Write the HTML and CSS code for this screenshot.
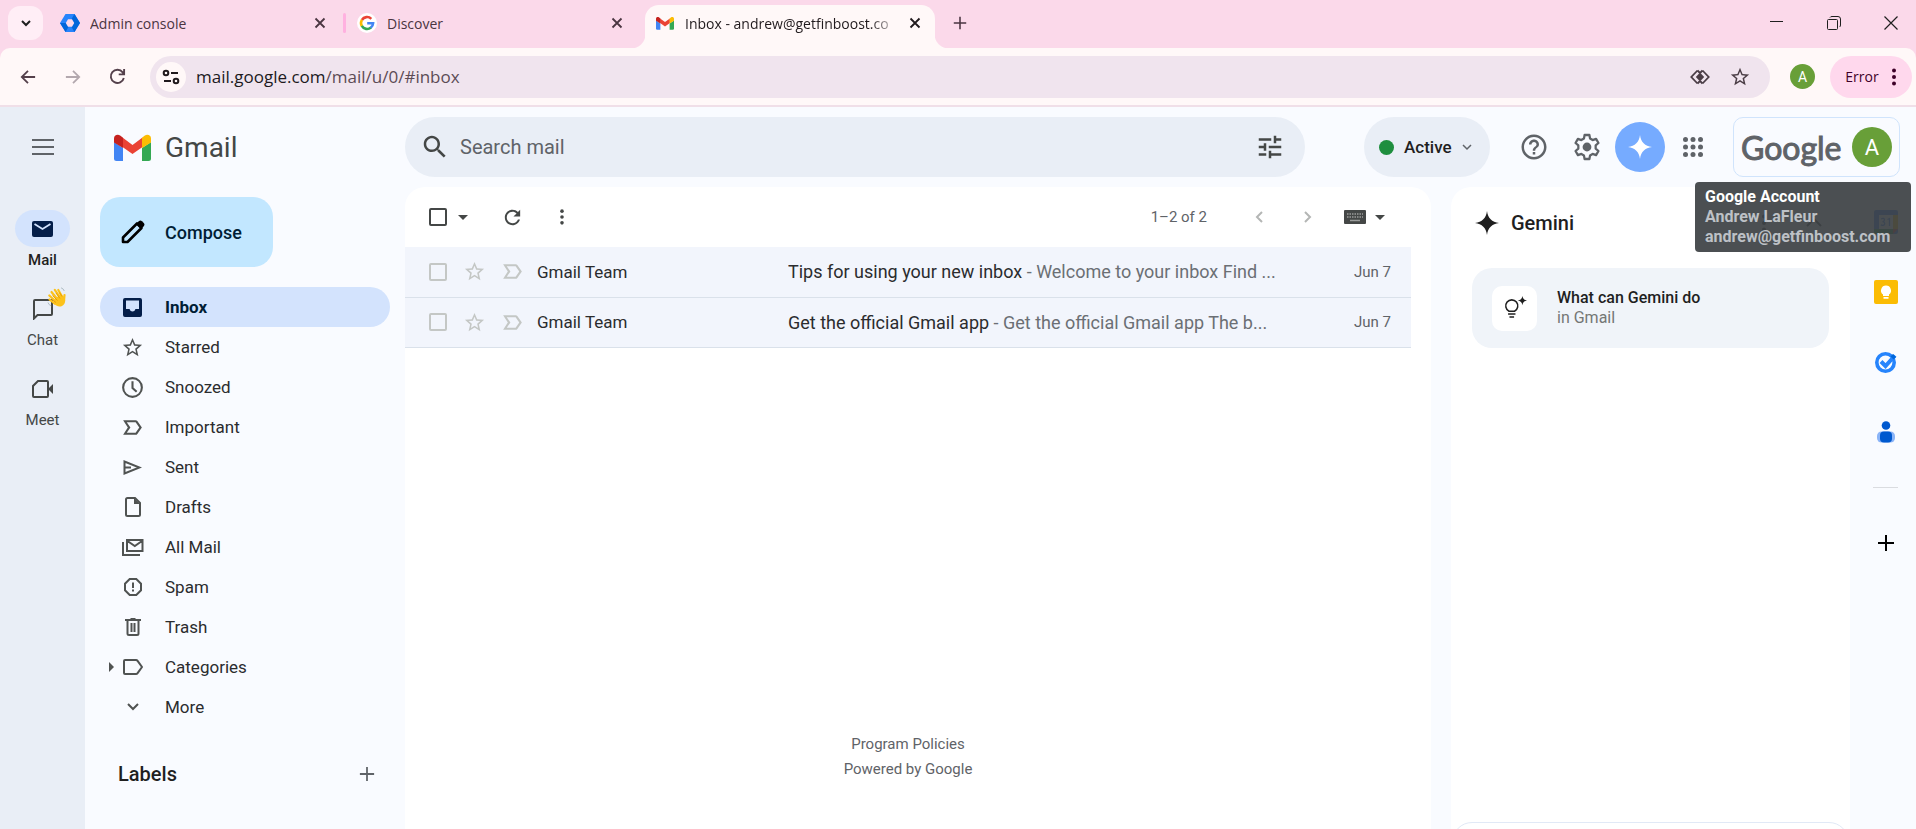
FILE: index.html
```html
<!DOCTYPE html>
<html lang="en">
<head>
<meta charset="utf-8">
<title>Inbox - andrew@getfinboost.com</title>
<link rel="stylesheet" href="styles.css">
</head>
<body>
<svg class="defs" aria-hidden="true">
  <symbol id="gmail" viewBox="0 0 37 28">
    <path fill="#4285f4" d="M0 9v16.500a2.500 2.500 0 0 0 2.500 2.500H9V15z"/>
    <path fill="#34a853" d="M37 9v16.500a2.500 2.500 0 0 1-2.500 2.500H28V15z"/>
    <path fill="#ea4335" d="M8.500 4.500l10 7.500 10-7.500v9.500L18.500 21 8.500 14z"/>
    <path fill="#fbbc04" d="M28 4.700l2.500-2C33.300.6 37 2 37 5.300V9.500L28 15z"/>
    <path fill="#c5221f" d="M9 4.700l-2.500-2C3.700.6 0 2 0 5.300V9.500L9 15z"/>
  </symbol>
  <symbol id="close" viewBox="0 0 12 12"><path d="M1.500 1.500l9 9M10.500 1.500l-9 9" stroke="currentColor" stroke-width="1.800" fill="none"/></symbol>
  <symbol id="star" viewBox="0 0 24 24"><path fill="currentColor" d="M22 9.240l-7.190-.62L12 2 9.190 8.630 2 9.240l5.460 4.730L5.820 21 12 17.270 18.180 21l-1.630-7.030L22 9.240zM12 15.400l-3.760 2.270 1-4.280-3.320-2.880 4.380-.38L12 6.100l1.710 4.040 4.380.38-3.320 2.880 1 4.280L12 15.400z"/></symbol>
  <symbol id="important" viewBox="0 0 24 24"><path fill="currentColor" d="M15 19H3l4.500-7L3 5h12c.65 0 1.260.31 1.630.84L21 12l-4.370 6.160c-.37.52-.98.84-1.630.84zm-8.500-2H15l3.500-5L15 7H6.500l3.500 5-3.500 5z"/></symbol>
  <symbol id="caret" viewBox="0 0 10 5"><path fill="currentColor" d="M0 0h10L5 5z"/></symbol>
  <symbol id="dots" viewBox="0 0 6 20"><circle cx="3" cy="3.500" r="2" fill="currentColor"/><circle cx="3" cy="10" r="2" fill="currentColor"/><circle cx="3" cy="16.500" r="2" fill="currentColor"/></symbol>
  <symbol id="spark" viewBox="0 0 24 24"><path fill="currentColor" d="M12 0c.8 7 5 11.200 12 12-7 .8-11.200 5-12 12-.8-7-5-11.200-12-12 7-.8 11.200-5 12-12z"/></symbol>
  <symbol id="plus" viewBox="0 0 18 18"><path d="M9 1v16M1 9h16" stroke="currentColor" stroke-width="2" fill="none"/></symbol>
</svg>

<header class="browser">
  <div class="tabstrip">
    <button class="tab-search" aria-label="Search tabs"><svg width="10" height="8" viewBox="0 0 10 8"><path d="M1 2l4 4 4-4" fill="none" stroke="currentColor" stroke-width="2"/></svg></button>
    <div class="tab tab-admin">
      <svg width="20" height="20" viewBox="0 0 20 20"><path fill="#2684fc" d="M5.500 1h9L20 10l-5.500 9h-9L0 10z"/><path fill="#0066da" d="M14.500 1L20 10l-5.500 9-3-5 2.500-4-2.500-4zM0 10h6l2.500 4-3 5z"/><path fill="#fbd9ea" d="M8 6.200h4l2.200 3.800-2.200 3.800H8L5.800 10z"/></svg>
      <span class="tab-title">Admin console</span>
      <button class="tab-close" aria-label="Close Admin console"><svg width="12" height="12"><use href="#close"/></svg></button>
    </div>
    <span class="tab-sep"></span>
    <div class="tab tab-discover">
      <svg width="20" height="20" viewBox="0 0 20 20"><circle cx="10" cy="10" r="10" fill="#fff"/><g fill="none" stroke-width="2.600"><path stroke="#ea4335" d="M4.900 7A6 6 0 0 1 14.300 5.800"/><path stroke="#fbbc04" d="M4.900 13.100A6 6 0 0 1 4.900 6.900"/><path stroke="#34a853" d="M14 14.500A6 6 0 0 1 4.800 12.900"/><path stroke="#4285f4" d="M10.200 10.200h5.900A6 6 0 0 1 13.700 14.700"/></g></svg>
      <span class="tab-title">Discover</span>
      <button class="tab-close" aria-label="Close Discover"><svg width="12" height="12"><use href="#close"/></svg></button>
    </div>
    <div class="tab tab-active">
      <svg width="18" height="14"><use href="#gmail"/></svg>
      <span class="tab-title">Inbox - andrew@getfinboost.co</span>
      <button class="tab-close" aria-label="Close Inbox"><svg width="12" height="12"><use href="#close"/></svg></button>
    </div>
    <button class="new-tab" aria-label="New tab"><svg width="14" height="14"><use href="#plus"/></svg></button>
    <div class="window-controls">
      <button aria-label="Minimize"><svg width="14" height="14" viewBox="0 0 14 14"><path d="M0 5.500h13" stroke="currentColor"/></svg></button>
      <button aria-label="Restore"><svg width="14" height="14" viewBox="0 0 14 14" fill="none" stroke="currentColor"><rect x=".5" y="3.500" width="10" height="10" rx="1"/><path d="M3 1.500Q3.500.5 5 .5h6q2.500 0 2.500 2.500v6q0 1.500-1 2"/></svg></button>
      <button aria-label="Close window"><svg width="14" height="14" viewBox="0 0 14 14"><path d="M.5.5l13 13M13.500.5l-13 13" stroke="currentColor" stroke-width="1.200"/></svg></button>
    </div>
  </div>
  <div class="toolbar">
    <button class="nav-btn" aria-label="Back"><svg width="16" height="16" viewBox="0 0 18 18" fill="none" stroke="currentColor" stroke-width="2"><path d="M17 9H2.500M9 2L2 9l7 7"/></svg></button>
    <button class="nav-btn nav-off" aria-label="Forward"><svg width="16" height="16" viewBox="0 0 18 18" fill="none" stroke="currentColor" stroke-width="2"><path d="M1 9h14.500M9 2l7 7-7 7"/></svg></button>
    <button class="nav-btn" aria-label="Reload"><svg width="17" height="17" viewBox="0 0 18 18" fill="none" stroke="currentColor" stroke-width="2"><path d="M15.700 10.500A7 7 0 1 1 14.500 4.600L16 6.500M16 1v5.700h-5.700"/></svg></button>
    <div class="omnibox">
      <button class="site-info" aria-label="Site information"><svg width="18" height="16" viewBox="0 0 18 16" fill="none" stroke="currentColor" stroke-width="2"><circle cx="4" cy="4" r="2.300"/><path d="M9 4h7M2 12h7"/><circle cx="14" cy="12" r="2.300"/></svg></button>
      <a class="url" href="#inbox"><span class="host">mail.google.com</span>/mail/u/0/#inbox</a>
      <button class="omni-btn" aria-label="Lens"><svg width="20" height="16" viewBox="0 0 20 16"><g fill="none" stroke="currentColor" stroke-width="1.800"><path d="M7.500 1.500L1.300 8l6.200 6.500"/><path d="M12.500 1.500L18.700 8l-6.200 6.500M7.500 1.500L10 4M7.500 14.500L10 12M12.500 1.500L10 4M12.500 14.500L10 12"/></g><path fill="currentColor" d="M10 3.500l4.200 4.500-4.200 4.500L5.800 8z"/></svg></button>
      <button class="omni-btn" aria-label="Bookmark"><svg width="22" height="22"><use href="#star"/></svg></button>
    </div>
    <span class="profile">A</span>
    <button class="error-btn">Error <svg width="6" height="20"><use href="#dots"/></svg></button>
  </div>
</header>

<div class="app">
  <nav class="rail" aria-label="Apps">
    <button class="menu-btn" aria-label="Main menu"><svg width="22" height="16" viewBox="0 0 22 16"><path d="M0 1h22M0 8h22M0 15h22" stroke="currentColor" stroke-width="2"/></svg></button>
    <a class="rail-item rail-on" href="#mail"><span class="rail-icon"><svg width="21" height="16" viewBox="0 0 21 16"><rect width="21" height="16" rx="2" fill="currentColor"/><path d="M2.500 3l8 5 8-5" fill="none" stroke="#d3e3fd" stroke-width="1.800"/></svg></span>Mail</a>
    <a class="rail-item" href="#chat"><span class="rail-icon"><svg width="22" height="22" viewBox="0 0 22 22"><path d="M2 20.500V3q0-1 1-1h16q1 0 1 1v13q0 1-1 1H5.500z" fill="none" stroke="currentColor" stroke-width="2"/></svg><svg class="wave" width="20" height="20" viewBox="0 0 20 20"><g stroke="#fcc21b" stroke-linecap="round" fill="none" stroke-width="2.200"><path d="M4.500 5l6.500 8M7.800 2.800l5.500 8M11.300 3l4 7M2.300 8.500l7 6.500M2.500 12.500l5 4M17.500 8l-.5 6"/></g><path fill="#fcc21b" d="M7.500 12l6.500-5 3.500 4c1.500 3 .5 6.500-2.500 8-3 1.300-6 0-9-3z"/><path d="M5.500 8.500l5 5M9 6l4 5.500M12.500 5.500l2.500 4M5 12.500l4 3" stroke="#e59600" stroke-width=".8"/><path d="M14 .8q2.500.7 3.300 3.200M1 15.500q.7 2.500 3.200 3.300" stroke="#b0bec5" fill="none"/></svg></span>Chat</a>
    <a class="rail-item" href="#meet"><span class="rail-icon"><svg width="22" height="18" viewBox="0 0 22 18"><path d="M6 1h9q1 0 1 1v14q0 1-1 1H2q-1 0-1-1V6z" fill="none" stroke="currentColor" stroke-width="2"/><path d="M16 9l5-5v10z" fill="currentColor"/></svg></span>Meet</a>
  </nav>

  <div class="page">
    <header class="topbar">
      <a class="brand" href="#inbox"><svg width="37" height="28"><use href="#gmail"/></svg><span>Gmail</span></a>
      <form class="search" role="search">
        <button type="button" aria-label="Search"><svg width="30" height="30" viewBox="0 0 24 24"><path fill="currentColor" d="M15.500 14h-.79l-.28-.27C15.410 12.590 16 11.110 16 9.500 16 5.910 13.090 3 9.500 3S3 5.910 3 9.500 5.910 16 9.500 16c1.610 0 3.090-.59 4.230-1.570l.27.28v.79l5 4.990L20.490 19l-4.990-5zm-6 0C7.010 14 5 11.990 5 9.500S7.010 5 9.500 5 14 7.010 14 9.500 11.990 14 9.500 14z"/></svg></button>
        <input type="text" aria-label="Search mail" placeholder="Search mail">
        <button type="button" aria-label="Show search options"><svg width="30" height="30" viewBox="0 0 24 24"><path fill="currentColor" d="M3 17v2h6v-2H3zM3 5v2h10V5H3zm10 16v-2h8v-2h-8v-2h-2v6h2zM7 9v2H3v2h4v2h2V9H7zm14 4v-2H11v2h10zm-6-4h2V7h4V5h-4V3h-2v6z"/></svg></button>
      </form>
      <div class="top-actions">
        <button class="status"><span class="status-dot"></span>Active<svg width="10" height="7" viewBox="0 0 10 7"><path d="M1 1l4 4 4-4" fill="none" stroke="#5f6368" stroke-width="1.500"/></svg></button>
        <button class="round" aria-label="Support"><svg width="30" height="30" viewBox="0 0 24 24"><path fill="currentColor" d="M11 18h2v-2h-2v2zm1-16C6.480 2 2 6.480 2 12s4.480 10 10 10 10-4.480 10-10S17.520 2 12 2zm0 18c-4.410 0-8-3.590-8-8s3.590-8 8-8 8 3.590 8 8-3.590 8-8 8zm0-14c-2.210 0-4 1.790-4 4h2c0-1.100.9-2 2-2s2 .9 2 2c0 2-3 1.750-3 5h2c0-2.250 3-2.500 3-5 0-2.210-1.790-4-4-4z"/></svg></button>
        <button class="round" aria-label="Settings"><svg width="32" height="32" viewBox="0 0 24 24"><path fill="none" stroke="currentColor" stroke-width="1.700" stroke-linejoin="round" d="M10.200 3h3.600l.5 2.700 1.900 1.100 2.600-.9 1.800 3.100-2.100 1.800v2.400l2.100 1.800-1.800 3.100-2.600-.9-1.900 1.100-.5 2.700h-3.600l-.5-2.700-1.900-1.100-2.600.9L3.400 15l2.100-1.800v-2.400L3.400 9l1.800-3.100 2.600.9 1.900-1.100z"/><circle cx="12" cy="12" r="3.300" fill="currentColor"/></svg></button>
        <button class="round ask" aria-label="Ask Gemini"><svg width="24" height="24"><use href="#spark"/></svg></button>
        <button class="round" aria-label="Google apps"><svg width="20" height="20" viewBox="0 0 20 20" fill="currentColor"><circle cx="2.500" cy="2.500" r="2.500"/><circle cx="10" cy="2.500" r="2.500"/><circle cx="17.500" cy="2.500" r="2.500"/><circle cx="2.500" cy="10" r="2.500"/><circle cx="10" cy="10" r="2.500"/><circle cx="17.500" cy="10" r="2.500"/><circle cx="2.500" cy="17.500" r="2.500"/><circle cx="10" cy="17.500" r="2.500"/><circle cx="17.500" cy="17.500" r="2.500"/></svg></button>
        <div class="account">
          <span class="google">Google</span>
          <button class="avatar" aria-describedby="account-tip">A</button>
          <div class="tooltip" id="account-tip" role="tooltip"><div class="tip-title">Google Account</div><div>Andrew LaFleur</div><div>andrew@getfinboost.com</div></div>
        </div>
      </div>
    </header>

    <div class="content">
      <aside class="sidebar">
        <button class="compose"><svg width="24" height="24" viewBox="0 0 24 24"><path d="M2 22v-4.500L16 3.500l4.500 4.500L6.500 22z" fill="none" stroke="#000" stroke-width="2.600" stroke-linejoin="round"/><path d="M15 4l3-3q1.500-1 3 .2l2 2q1 1.300 0 2.800l-3 3z"/></svg>Compose</button>
        <nav class="folders" aria-label="Mail folders">
          <a class="folder folder-on" href="#inbox"><svg width="19" height="19" viewBox="0 0 19 19"><path fill="currentColor" fill-rule="evenodd" d="M2 0h15q2 0 2 2v15q0 2-2 2H2q-2 0-2-2V2Q0 0 2 0zM3 2.500V11h3.500q.8 2.500 3 2.500t3-2.500H16V2.500z"/></svg>Inbox</a>
          <a class="folder" href="#starred"><svg width="23" height="23"><use href="#star"/></svg>Starred</a>
          <a class="folder" href="#snoozed"><svg width="25" height="25" viewBox="0 0 24 24"><g fill="none" stroke="currentColor" stroke-width="2"><circle cx="12" cy="12" r="9"/><path d="M12 6v6.500l4 3.500"/></g></svg>Snoozed</a>
          <a class="folder" href="#important"><svg width="25" height="25"><use href="#important"/></svg>Important</a>
          <a class="folder" href="#sent"><svg width="19" height="15" viewBox="0 0 19 15"><path d="M1.500 1.500v12l15-6zM1.500 7.500H8" fill="none" stroke="currentColor" stroke-width="2"/></svg>Sent</a>
          <a class="folder" href="#drafts"><svg width="16" height="20" viewBox="0 0 16 20"><path d="M2.500 1H10l5 5v11.500q0 1.500-1.500 1.500h-11Q1 19 1 17.500v-15Q1 1 2.500 1z" fill="none" stroke="currentColor" stroke-width="2"/><path fill="currentColor" d="M9 1v6h6z"/></svg>Drafts</a>
          <a class="folder" href="#all"><svg width="22" height="18" viewBox="0 0 22 18"><path d="M5 2h15.500v11H5zM5.500 3l7.300 5L20 3M1 4v13h17" fill="none" stroke="currentColor" stroke-width="2"/></svg>All Mail</a>
          <a class="folder" href="#spam"><svg width="18" height="18" viewBox="0 0 18 18"><path d="M5.700 1h6.600L17 5.700v6.600L12.300 17H5.700L1 12.300V5.700zM9 4.500V10M9 11.500v2" fill="none" stroke="currentColor" stroke-width="2"/></svg>Spam</a>
          <a class="folder" href="#trash"><svg width="16" height="18" viewBox="0 0 16 18"><path d="M0 2h16M5.500 1h5M2.500 2v13.500q0 1.500 1.500 1.500h8q1.500 0 1.500-1.500V2M6.500 5v9M9.500 5v9" fill="none" stroke="currentColor" stroke-width="2"/></svg>Trash</a>
          <a class="folder" href="#categories"><svg class="expander" width="5" height="10" viewBox="0 0 5 10"><path fill="currentColor" d="M0 0l5 5-5 5z"/></svg><svg width="20" height="16" viewBox="0 0 20 16"><path d="M2 1h11q1 0 1.600.8L19 8l-4.400 6.200Q14 15 13 15H2q-1 0-1-1V2q0-1 1-1z" fill="none" stroke="currentColor" stroke-width="2"/></svg>Categories</a>
          <a class="folder" href="#more"><svg width="12" height="8" viewBox="0 0 12 8"><path d="M1 1l5 5 5-5" fill="none" stroke="currentColor" stroke-width="2"/></svg>More</a>
        </nav>
        <div class="labels"><h2>Labels</h2><button aria-label="Create new label"><svg width="16" height="16"><use href="#plus"/></svg></button></div>
      </aside>

      <main class="mail">
        <div class="mail-tools">
          <input type="checkbox" class="tick tick-all" aria-label="Select all">
          <button class="tool tool-caret" aria-label="Select options"><svg width="10" height="5"><use href="#caret"/></svg></button>
          <button class="tool" aria-label="Refresh"><svg width="23" height="23" viewBox="0 0 24 24"><path fill="currentColor" d="M17.650 6.350C16.200 4.900 14.210 4 12 4c-4.420 0-7.990 3.580-7.990 8s3.570 8 7.990 8c3.730 0 6.840-2.550 7.730-6h-2.080c-.82 2.330-3.040 4-5.650 4-3.310 0-6-2.690-6-6s2.690-6 6-6c1.660 0 3.140.69 4.220 1.780L13 11h7V4l-2.350 2.350z"/></svg></button>
          <button class="tool" aria-label="More"><svg width="6" height="18"><use href="#dots"/></svg></button>
          <span class="count">1–2 of 2</span>
          <button class="tool tool-off" aria-label="Newer"><svg width="8" height="12" viewBox="0 0 8 12"><path d="M7 1L2 6l5 5" fill="none" stroke="currentColor" stroke-width="2"/></svg></button>
          <button class="tool tool-off" aria-label="Older"><svg width="8" height="12" viewBox="0 0 8 12"><path d="M1 1l5 5-5 5" fill="none" stroke="currentColor" stroke-width="2"/></svg></button>
          <button class="tool tool-input" aria-label="Input tools"><svg width="22" height="14" viewBox="0 0 22 14"><rect width="22" height="14" rx="1" fill="#444746"/><path d="M3 4h16M3 7h16" stroke="#9a9c9b" stroke-width="1.500" stroke-dasharray="1.500 1"/><path d="M6 10.500h10" stroke="#9a9c9b" stroke-width="1.500"/></svg><svg width="10" height="5"><use href="#caret"/></svg></button>
        </div>
        <table class="list">
          <colgroup><col class="c-tick"><col class="c-star"><col class="c-imp"><col class="c-from"><col><col class="c-date"></colgroup>
          <tbody>
            <tr>
              <td class="cell-tick"><input type="checkbox" class="tick" aria-label="Select Tips for using your new inbox"></td>
              <td><button class="mark" aria-label="Star"><svg width="23" height="23"><use href="#star"/></svg></button></td>
              <td><button class="mark" aria-label="Important"><svg width="25" height="25"><use href="#important"/></svg></button></td>
              <td class="from">Gmail Team</td>
              <td class="subject">Tips for using your new inbox <span>- Welcome to your inbox Find ...</span></td>
              <td class="date">Jun 7</td>
            </tr>
            <tr>
              <td class="cell-tick"><input type="checkbox" class="tick" aria-label="Select Get the official Gmail app"></td>
              <td><button class="mark" aria-label="Star"><svg width="23" height="23"><use href="#star"/></svg></button></td>
              <td><button class="mark" aria-label="Important"><svg width="25" height="25"><use href="#important"/></svg></button></td>
              <td class="from">Gmail Team</td>
              <td class="subject">Get the official Gmail app <span>- Get the official Gmail app The b...</span></td>
              <td class="date">Jun 7</td>
            </tr>
          </tbody>
        </table>
        <footer class="policies"><a href="#policies">Program Policies</a><a href="#google">Powered by Google</a></footer>
      </main>

      <section class="gemini">
        <div class="gemini-head"><svg width="24" height="24"><use href="#spark"/></svg><h2>Gemini</h2>
          <button aria-label="More options"><svg width="6" height="20"><use href="#dots"/></svg></button>
          <button aria-label="Collapse"><svg width="16" height="9" viewBox="0 0 16 9"><path d="M1 8l7-7 7 7" fill="none" stroke="currentColor" stroke-width="2"/></svg></button>
        </div>
        <button class="suggestion">
          <span class="tile"><svg width="24" height="24" viewBox="0 0 26 26"><path d="M6.500 16.500a6.500 6.500 0 1 1 6 0zM5.500 19.500h8M7 22.800h5" fill="none" stroke="#1f1f1f" stroke-width="1.700"/><path fill="#1f1f1f" d="M21 0q.6 4.400 5 5-4.400.6-5 5-.6-4.400-5-5 4.400-.6 5-5z"/></svg></span>
          <span class="suggestion-text"><strong>What can Gemini do</strong><em>in Gmail</em></span>
        </button>
        <div class="prompt"></div>
      </section>

      <aside class="addons" aria-label="Side panel">
        <button aria-label="Calendar"><svg width="24" height="24" viewBox="0 0 24 24"><rect width="24" height="24" rx="2" fill="#4285f4"/><path fill="#fbbc04" d="M19 5h5v14h-5z"/><path fill="#34a853" d="M0 19h19v5H0z"/><path fill="#ea4335" d="M19 19h5l-5 5z"/><path fill="#fff" d="M5 5h14v14H5z"/><path d="M7 9q3-1.500 3.500.7 0 1.800-2 2 2.500.3 2.200 2.300-.8 2.200-3.900.8M13.500 9.500l2-1V16" fill="none" stroke="#4285f4" stroke-width="1.300"/></svg></button>
        <button aria-label="Keep"><svg width="24" height="24" viewBox="0 0 24 24"><rect width="24" height="24" rx="2" fill="#fbbc04"/><path fill="#fff" d="M12 5.500a5 5 0 0 0-3 9V16h6v-1.500a5 5 0 0 0-3-9zM9.500 17h5v1.800h-5z"/></svg></button>
        <button aria-label="Tasks"><svg width="24" height="22" viewBox="0 0 24 22"><circle cx="11.500" cy="11.500" r="8.700" fill="none" stroke="#2684fc" stroke-width="3.600"/><path d="M7 10.500l4.500 4.500L21 4.500" fill="none" stroke="#2684fc" stroke-width="4"/><path d="M16.500 5.500l2.500-2.500 3 3-2.500 2.500z" fill="#0066da"/></svg></button>
        <button aria-label="Contacts"><svg width="18" height="22" viewBox="0 0 18 22"><rect y="10.500" width="18" height="11" rx="4.500" fill="#8ab4f8"/><rect x="3" y="10.500" width="12" height="11" rx="4" fill="#0059cf"/><circle cx="9" cy="4.500" r="4.300" fill="#0059cf"/></svg></button>
        <hr>
        <button class="addons-plus" aria-label="Get add-ons"><svg width="18" height="18"><use href="#plus"/></svg></button>
      </aside>
    </div>
  </div>
</div>
</body>
</html>
```
FILE: styles.css
```css
* { box-sizing: border-box; }

body {
  margin: 0;
  height: 100vh;
  display: flex;
  flex-direction: column;
  overflow: hidden;
  background: #f9fbff;
  color: #1f1f1f;
  font-family: Roboto, "Liberation Sans", sans-serif;
  font-size: 17px;
}

button, input { font: inherit; color: inherit; }
button {
  display: flex;
  align-items: center;
  justify-content: center;
  padding: 0;
  border: 0;
  background: none;
}
a { color: inherit; text-decoration: none; }
svg { flex: none; display: block; }
h2 { margin: 0; font-size: 20px; font-weight: 500; }
.defs { position: absolute; width: 0; height: 0; }

/* Browser frame */
.browser {
  flex: none;
  font-family: "Open Sans", "Noto Sans", sans-serif;
  font-size: 14px;
  color: #4a3541;
  background: #fbd9ea;
  border-bottom: 2px solid #f0dfe8;
}
.tabstrip {
  display: flex;
  align-items: center;
  height: 48px;
  padding: 0 0 2px 8px;
}
.tab-search {
  width: 35px;
  height: 34px;
  border-radius: 12px;
  background: #ffeef6;
  color: #1f1f1f;
}
.tab { display: flex; align-items: center; height: 100%; }
.tab-title {
  flex: 1;
  min-width: 0;
  margin-left: 10px;
  overflow: hidden;
  white-space: nowrap;
}
.tab-close { width: 24px; height: 24px; }
.tab-admin { width: 289px; margin-left: 17px; }
.tab-admin .tab-close { margin-right: 17px; }
.tab-sep { width: 3px; height: 20px; background: #ffb1e0; border-radius: 2px; margin-right: 11px; margin-left: -6px; }
.tab-discover { width: 288px; }
.tab-discover .tab-close { margin-right: 16px; }
.tab-active {
  position: relative;
  align-self: flex-end;
  width: 290px;
  height: 43px;
  margin-bottom: -2px;
  padding: 0 8px 7px 11px;
  border-radius: 14px 14px 0 0;
  background: #fff8f8;
  color: #201a1d;
}
.tab-active::before, .tab-active::after {
  content: "";
  position: absolute;
  bottom: 0;
  width: 14px;
  height: 14px;
}
.tab-active::before { right: 100%; background: radial-gradient(circle at 0 0, #fbd9ea 14px, #fff8f8 15px); }
.tab-active::after { left: 100%; background: radial-gradient(circle at 100% 0, #fbd9ea 14px, #fff8f8 15px); }
.tab-active .tab-title { margin-left: 11px; margin-right: 3px; mask-image: linear-gradient(to right, #000 86%, transparent); }
.new-tab { width: 28px; height: 28px; margin-left: 11px; }
.window-controls { display: flex; margin-left: auto; align-self: stretch; color: #1f1f1f; }
.window-controls button { width: 57px; padding-bottom: 1px; }
.window-controls button:last-child { margin-right: -3px; }

.toolbar {
  display: flex;
  align-items: center;
  height: 57px;
  padding: 0 4px 0 5px;
  background: #fff8f8;
  border-radius: 10px 10px 0 0;
}
.nav-btn { width: 45px; height: 45px; color: #54404b; }
.nav-off { color: #b3a8ae; }
.omnibox {
  flex: 1;
  display: flex;
  align-items: center;
  height: 42px;
  margin-left: 10px;
  padding: 0 10px 0 6px;
  border-radius: 21px;
  background: #f0e4ee;
}
.site-info { width: 30px; height: 30px; border-radius: 50%; background: #fff8f8; color: #201a1d; }
.url { flex: 1; margin-left: 10px; font-size: 17px; color: #5c4b55; }
.host { color: #201a1d; }
.omni-btn { width: 40px; height: 40px; color: #4a3d45; }
.profile {
  display: flex;
  align-items: center;
  justify-content: center;
  width: 25px;
  height: 25px;
  margin: 0 15px 0 20px;
  border-radius: 50%;
  background: #689f38;
  color: #fff;
  font-family: Roboto, sans-serif;
}
.error-btn { width: 82px; height: 42px; gap: 12px; border-radius: 21px; background: #ffd8ed; color: #3e0028; }

/* Application frame */
.app { flex: 1; display: flex; min-height: 0; }
.rail {
  flex: none;
  width: 85px;
  display: flex;
  flex-direction: column;
  align-items: center;
  background: #e9eef6;
  color: #444746;
  font-size: 15px;
}
.menu-btn { width: 48px; height: 80px; margin-bottom: 20px; color: #5f6368; }
.rail-item {
  display: flex;
  flex-direction: column;
  align-items: center;
  height: 80px;
  padding-top: 3px;
  line-height: 26px;
}
.rail-icon {
  position: relative;
  display: flex;
  align-items: center;
  justify-content: center;
  width: 55px;
  height: 37px;
  border-radius: 19px;
}
.rail-on { color: #1f1f1f; font-weight: 500; }
.rail-on .rail-icon { background: #d3e3fd; color: #041e49; }
.wave { position: absolute; top: -3px; right: 3px; }

.page { flex: 1; min-width: 0; display: flex; flex-direction: column; }
.topbar { flex: none; display: flex; align-items: center; height: 80px; padding-right: 16px; }
.brand {
  flex: none;
  display: flex;
  align-items: center;
  gap: 14px;
  width: 320px;
  padding-left: 29px;
  color: #444746;
  font-size: 28px;
}
.search {
  flex: 1;
  max-width: 900px;
  display: flex;
  align-items: center;
  height: 60px;
  padding: 0 20px 0 15px;
  border-radius: 30px;
  background: #e9eef6;
  color: #444746;
}
.search input {
  flex: 1;
  min-width: 0;
  margin-left: 10px;
  padding: 0;
  border: 0;
  outline: 0;
  background: none;
  font-size: 20px;
}
.search input::placeholder { color: #5f6368; opacity: 1; }
.top-actions { display: flex; align-items: center; gap: 3px; margin-left: auto; color: #5f6368; }
.status {
  justify-content: flex-start;
  gap: 10px;
  width: 126px;
  height: 60px;
  margin-right: 16px;
  padding-left: 15px;
  border-radius: 30px;
  background: #e9eef6;
  color: #1f1f1f;
  font-weight: 500;
}
.status-dot { width: 15px; height: 15px; border-radius: 50%; background: #1e8e3e; }
.round { width: 50px; height: 50px; border-radius: 50%; }
.ask { background: #76abff; color: #fff; }
.account {
  position: relative;
  display: flex;
  align-items: center;
  justify-content: space-between;
  width: 167px;
  height: 60px;
  margin-left: 12px;
  padding: 0 7px 0 7px;
  border: 1px solid #d0e4fc;
  border-radius: 10px;
}
.google { font-family: Lato, sans-serif; font-size: 32px; -webkit-text-stroke: 1px currentColor; }
.avatar { width: 40px; height: 40px; border-radius: 50%; background: #689f38; color: #fff; font-size: 22px; }
.tooltip {
  position: absolute;
  z-index: 5;
  top: 64px;
  right: -12px;
  width: 216px;
  padding: 5px 10px;
  border-radius: 4px;
  background: rgba(60, 64, 67, 0.92);
  color: #bdc1c6;
  font-size: 16px;
  font-weight: 700;
  line-height: 20px;
  white-space: nowrap;
}
.tip-title { color: #fff; }

.content { flex: 1; display: flex; min-height: 0; }
.sidebar { flex: none; width: 320px; padding: 10px 15px 0; }
.compose {
  justify-content: flex-start;
  gap: 20px;
  width: 173px;
  height: 70px;
  padding-left: 21px;
  border-radius: 20px;
  background: #c2e7ff;
  color: #001d35;
  font-size: 18px;
  font-weight: 500;
}
.folders { margin-top: 20px; color: #2b2c2e; }
.folder {
  position: relative;
  display: grid;
  grid-template-columns: 65px 1fr;
  align-items: center;
  height: 40px;
  border-radius: 20px;
}
.folder svg { justify-self: center; color: #505352; }
.folder .expander { position: absolute; left: 9px; }
.folder-on { background: #d3e3fd; color: #001d35; font-weight: 700; }
.folder-on svg { color: #041e49; }
.labels { display: flex; align-items: center; justify-content: space-between; margin-top: 35px; padding: 0 15px 0 18px; height: 24px; }
.labels button { color: #5f6368; }

.mail {
  flex: 1;
  min-width: 0;
  display: flex;
  flex-direction: column;
  margin-right: 20px;
  background: #fff;
  border-radius: 20px 20px 0 0;
}
.mail-tools { display: flex; align-items: center; height: 60px; padding: 0 42px 0 24px; color: #444746; }
.tick {
  appearance: none;
  display: block;
  width: 18px;
  height: 18px;
  margin: 0;
  border: 2px solid #c4c7c5;
  border-radius: 2px;
}
.tick-all { border-color: #444746; }
.tool { width: 49px; height: 40px; }
.tool-caret { width: 32px; margin-right: 9px; }
.tool-off { color: #b4b6b5; }
.tool-input { gap: 9px; margin-left: 8px; }
.count { margin-left: auto; margin-right: 27px; font-size: 15px; color: #5f6368; }
.list { width: calc(100% - 20px); table-layout: fixed; border-collapse: collapse; white-space: nowrap; color: #2b2c2e; }
.list tr { height: 50px; background: #f2f5fc; border-bottom: 1px solid #dae1ea; }
.list td { padding: 0; vertical-align: middle; overflow: hidden; }
.list .cell-tick { padding-left: 24px; }
.c-tick { width: 58px; }
.c-star { width: 37px; }
.c-imp { width: 37px; }
.c-from { width: 251px; }
.c-date { width: 80px; }
.mark { color: #c4c7c5; }
.subject { font-size: 18px; }
.subject span { color: #6b6f74; }
.list .date { padding-right: 20px; text-align: right; font-size: 15px; color: #5f6368; }
.policies {
  display: flex;
  flex-direction: column;
  align-items: center;
  width: calc(100% - 20px);
  margin-top: auto;
  padding-bottom: 47px;
  font-size: 15px;
  line-height: 25px;
  color: #5f6368;
}

.gemini {
  flex: none;
  width: 399px;
  display: flex;
  flex-direction: column;
  background: #fff;
  border-radius: 20px 20px 0 0;
  overflow: hidden;
}
.gemini-head { display: flex; align-items: center; height: 71px; padding: 0 11px 0 24px; }
.gemini-head h2 { flex: 1; margin-left: 12px; }
.gemini-head button { width: 50px; height: 40px; color: #444746; }
.suggestion {
  justify-content: flex-start;
  gap: 20px;
  height: 80px;
  margin: 10px 21px 0;
  padding-left: 20px;
  border-radius: 20px;
  background: #f0f4f9;
  text-align: left;
  font-size: 16px;
  line-height: 20px;
}
.tile { display: flex; align-items: center; justify-content: center; width: 45px; height: 45px; border-radius: 10px; background: #fff; }
.suggestion-text { display: flex; flex-direction: column; }
.suggestion-text strong { font-weight: 500; }
.suggestion-text em { font-style: normal; color: #747775; }
.prompt { flex: none; height: 40px; margin: auto 1px -33px; border: 1px solid #e1e9f6; border-radius: 20px; }

.addons { flex: none; width: 66px; display: flex; flex-direction: column; align-items: center; padding-left: 5px; }
.addons button { width: 50px; height: 70px; }
.addons hr { width: 25px; margin: 20px 0; border: 0; border-top: 1px solid #dadce0; }
.addons .addons-plus { color: #000; }
```
